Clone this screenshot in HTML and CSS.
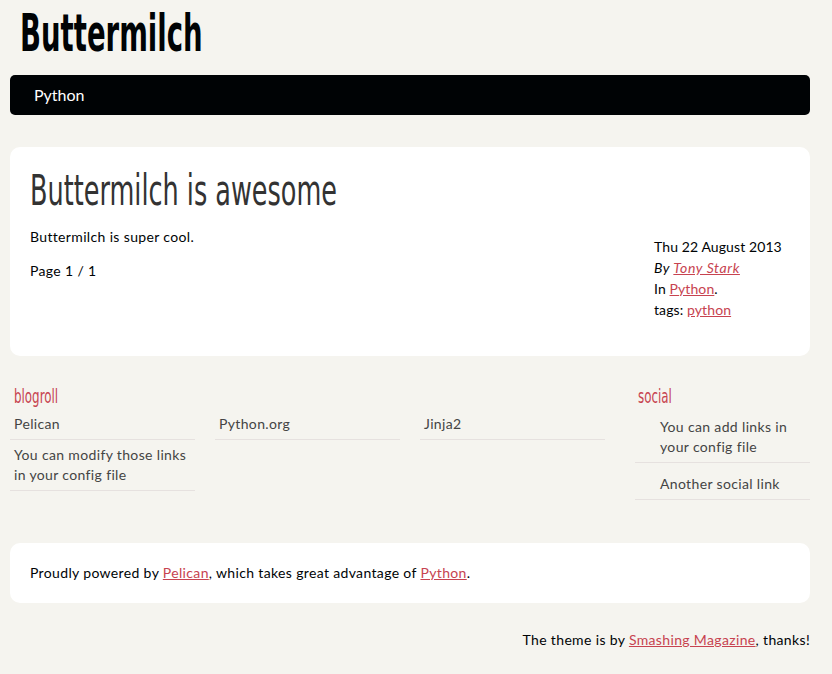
FILE: index.html
```html
<!DOCTYPE html>
<html lang="en">
<head>
<meta charset="utf-8">
<title>Buttermilch</title>
<link rel="stylesheet" href="styles.css">
</head>
<body>
<div class="page">
  <header class="banner">
    <h1 class="site-title"><span class="condensed">Buttermilch</span></h1>
    <nav class="menu"><a href="#">Python</a></nav>
  </header>

  <section class="featured">
    <h1 class="entry-title"><span class="condensed">Buttermilch is awesome</span></h1>
    <div class="entry-row">
      <div class="entry-content">
        <p>Buttermilch is super cool.</p>
        <p>Page 1 / 1</p>
      </div>
      <footer class="post-info">
        <div>Thu 22 August 2013</div>
        <div><em>By <a href="#">Tony Stark</a></em></div>
        <div>In <a href="#">Python</a>.</div>
        <div>tags: <a href="#">python</a></div>
      </footer>
    </div>
  </section>

  <section class="extras">
    <div class="blogroll">
      <h2 class="extras-title"><span class="condensed">blogroll</span></h2>
      <ul class="blogroll-list">
        <li>Pelican</li>
        <li>Python.org</li>
        <li>Jinja2</li>
        <li>You can modify those links in your config file</li>
      </ul>
    </div>
    <div class="social">
      <h2 class="extras-title"><span class="condensed">social</span></h2>
      <ul class="social-list">
        <li>You can add links in your config file</li>
        <li>Another social link</li>
      </ul>
    </div>
  </section>

  <footer class="contentinfo">
    <p>Proudly powered by <a href="#">Pelican</a>, which takes great advantage of <a href="#">Python</a>.</p>
  </footer>

  <p class="credit">The theme is by <a href="#">Smashing Magazine</a>, thanks!</p>
</div>
</body>
</html>
```

FILE: styles.css
```css
* { box-sizing: border-box; }

html, body {
  margin: 0;
  padding: 0;
  background: #f5f4ef;
}

body {
  color: #000305;
  font-family: Lato, "Open Sans", sans-serif;
  font-size: 14px;
  line-height: 21px;
  letter-spacing: 0.35px;
}

a { color: #c74350; }

.page {
  width: 800px;
  margin: 0 10px;
}

.condensed {
  display: inline-block;
  transform-origin: left center;
  white-space: nowrap;
  letter-spacing: 0;
}

.site-title {
  margin: 5px 0 0 0;
  padding-left: 10px;
  height: 60px;
  font-family: "DejaVu Sans Condensed", "DejaVu Sans", sans-serif;
  font-weight: bold;
  font-size: 51px;
  line-height: 58px;
  color: #000305;
}

.site-title .condensed { transform: scaleX(0.6); }

.menu {
  margin-top: 10px;
  height: 40px;
  background: #000305;
  border-radius: 5px;
  display: flex;
  align-items: center;
  padding-left: 24px;
  padding-bottom: 2px;
}

.menu a {
  color: #fff;
  text-decoration: none;
  font-size: 16px;
  letter-spacing: 0;
}

.featured {
  margin-top: 32px;
  background: #fff;
  border-radius: 10px;
  padding: 18px 20px 36px 20px;
}

.entry-title {
  margin: 0;
  height: 50px;
  font-family: "DejaVu Sans Condensed", "DejaVu Sans", sans-serif;
  font-weight: normal;
  font-size: 43px;
  line-height: 50px;
  color: #333;
}

.entry-title .condensed { transform: scaleX(0.66); }

.entry-row {
  display: flex;
  align-items: flex-start;
  margin-top: 11px;
}

.entry-content {
  flex: 1;
}

.entry-content p {
  margin: 0 0 13px 0;
}

.post-info {
  width: 136px;
  margin-top: 10px;
  letter-spacing: 0.1px;
}

.post-info em { letter-spacing: 0.6px; }

.extras {
  display: flex;
  margin-top: 28px;
  color: #444;
}

.blogroll { width: 595px; }

.social {
  width: 175px;
  margin-left: 30px;
}

.extras-title {
  margin: 0 0 1px 0;
  padding-left: 4px;
  font-family: "DejaVu Sans Condensed", "DejaVu Sans", sans-serif;
  font-weight: normal;
  font-size: 20px;
  line-height: 24px;
  color: #c74350;
}

.extras-title .condensed { transform: scaleX(0.66); }

.social .extras-title { padding-left: 3px; }

.extras ul {
  list-style: none;
  margin: 0;
  padding: 0;
}

.blogroll-list {
  display: grid;
  grid-template-columns: repeat(3, 185px);
  column-gap: 20px;
  align-items: start;
}

.extras li {
  line-height: 20px;
  border-bottom: 1px solid #e6e1df;
}

.blogroll-list li {
  padding: 5px 4px 5px 4px;
}

.extras .social-list {
  margin-top: -3px;
}

.social-list li {
  padding: 11px 4px 5px 25px;
}

.contentinfo {
  margin-top: 43px;
  background: #fff;
  border-radius: 10px;
  padding: 20px;
}

.contentinfo p {
  margin: 0;
  line-height: 20px;
}

.credit {
  margin: 27px 0 0 0;
  text-align: right;
  line-height: 20px;
}
```
